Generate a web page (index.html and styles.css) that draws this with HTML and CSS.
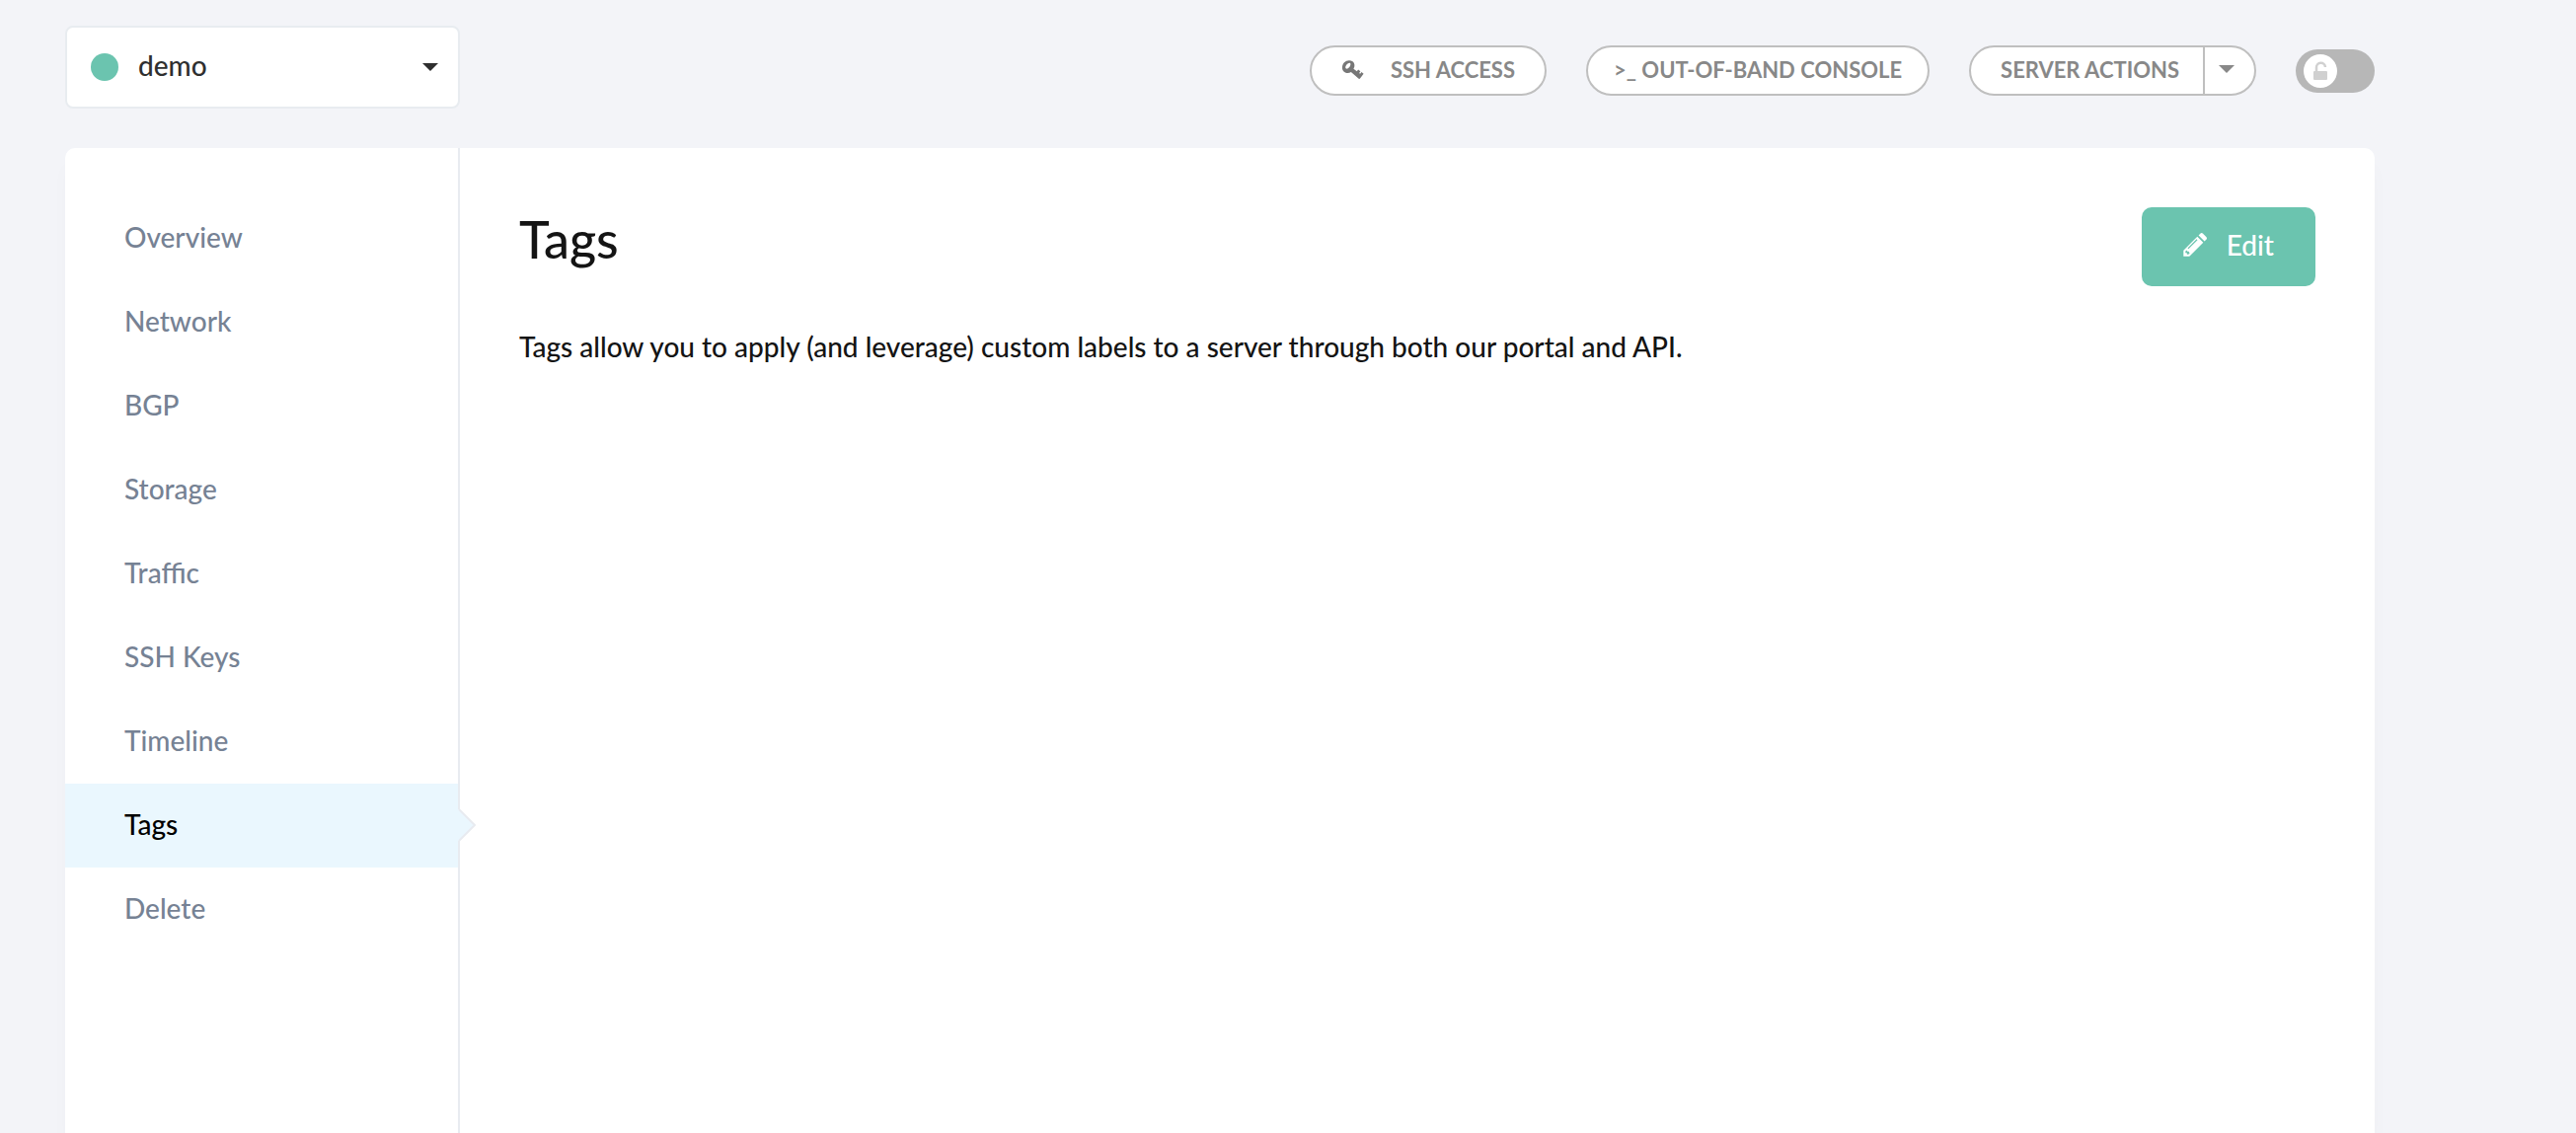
FILE: index.html
```html
<!DOCTYPE html>
<html lang="en">
<head>
  <meta charset="utf-8">
  <meta name="viewport" content="width=device-width, initial-scale=1">
  <title>Tags</title>
  <link rel="stylesheet" href="styles.css">
</head>
<body>
  <div class="page">
    <header class="toolbar">
      <div class="server-picker">
        <span class="status-dot"></span>
        <select class="server-select" aria-label="Server">
          <option>demo</option>
        </select>
        <svg class="caret" viewBox="0 0 16 8" aria-hidden="true"><path d="M0 0h16L8 8z"/></svg>
      </div>
      <div class="actions">
        <button class="pill" type="button">
          <svg class="key-icon" viewBox="0 0 24 24" aria-hidden="true">
            <path fill-rule="evenodd" d="M3 4.200C5.200 1.900 9 1.400 11.500 3.300c2.300 1.800 2.500 4.900.9 7.500l3.400 2.500 1.300-1.700 2.300 1.700-1.300 1.700 1 .8 1.400-1.700 2.100 1.600-3.600 4.900c-.3.400-.9.500-1.300.2L9.900 14.100c-2.400 1.500-5.200 1.300-7.100-.4C.2 11.300.5 6.900 3 4.200zM8.700 4.800C7.500 4.600 5.800 5.700 4.900 7.200 4 8.600 4 10 4.900 10.500c1.100.5 2.700-.5 3.700-2 .9-1.500 1.200-3.400.1-3.700z"/>
          </svg>
          SSH ACCESS
        </button>
        <button class="pill pill-compact" type="button">&gt;_ OUT-OF-BAND CONSOLE</button>
        <div class="split">
          <button class="split-main" type="button">SERVER ACTIONS</button>
          <button class="split-more" type="button" aria-label="More server actions">
            <svg class="caret" viewBox="0 0 16 8" aria-hidden="true"><path d="M0 0h16L8 8z"/></svg>
          </button>
        </div>
        <label class="lock">
          <input class="lock-input" type="checkbox" role="switch" aria-label="Lock server">
          <span class="lock-knob">
            <svg class="lock-icon" viewBox="0 0 16 20" aria-hidden="true">
              <path d="M4 11V6.500a4.500 4.500 0 0 1 9-.5" fill="none" stroke="currentColor" stroke-width="2.500"/>
              <rect x="1" y="10" width="14" height="9" rx="1" fill="currentColor"/>
            </svg>
          </span>
        </label>
      </div>
    </header>

    <div class="card">
      <nav class="sidebar" aria-label="Server sections">
        <a class="nav-link" href="#overview">Overview</a>
        <a class="nav-link" href="#network">Network</a>
        <a class="nav-link" href="#bgp">BGP</a>
        <a class="nav-link" href="#storage">Storage</a>
        <a class="nav-link" href="#traffic">Traffic</a>
        <a class="nav-link" href="#ssh-keys">SSH Keys</a>
        <a class="nav-link" href="#timeline">Timeline</a>
        <a class="nav-link active" href="#tags" aria-current="page">Tags
          <svg class="nav-arrow" viewBox="0 0 20 32" aria-hidden="true"><path class="arrow-fill" d="M0 0h1l16 16L1 32H0z"/><path class="arrow-line" d="M1 0l16 16L1 32"/></svg>
        </a>
        <a class="nav-link" href="#delete">Delete</a>
      </nav>
      <main class="content">
        <div class="content-head">
          <h1 class="title">Tags</h1>
          <button class="edit" type="button">
            <svg class="pencil-icon" viewBox="0 0 24 24" aria-hidden="true">
              <path fill-rule="evenodd" d="M14.300 3.800l6 6L6.300 23.800H.3v-6zM13.600 6.300L4.500 15.400l.9.900 9.100-9.100zM3.300 17.500l-1 1.300v1.400h1.500v1.600h1.400l1.400-1.100-1-1.900-1.300-.1z"/>
              <path d="M15.600 2.500l1.700-1.700a2 2 0 0 1 2.800 0l3.200 3.200a2 2 0 0 1 0 2.800l-1.700 1.700z"/>
            </svg>
            Edit
          </button>
        </div>
        <p class="intro">Tags allow you to apply (and leverage) custom labels to a server through both our portal and API.</p>
      </main>
    </div>
  </div>
</body>
</html>
```
FILE: styles.css
```css
*,
*::before,
*::after {
  box-sizing: border-box;
}

body {
  margin: 0;
  background: #f3f4f8;
  color: #141414;
  font-family: Lato, "Liberation Sans", sans-serif;
  font-size: 28px;
  font-weight: 500;
  line-height: 40px;
}

button,
select {
  font: inherit;
  color: inherit;
  cursor: pointer;
}

svg {
  display: block;
  flex: none;
  fill: currentColor;
}

.page {
  display: flex;
  flex-direction: column;
  gap: 40px;
  min-height: 100vh;
  padding: 26px 204px 0 66px;
}

.toolbar {
  display: flex;
  justify-content: space-between;
  align-items: flex-start;
}

.server-picker {
  display: flex;
  align-items: center;
  width: 400px;
  height: 84px;
  padding: 0 20px 0 24px;
  border: 2px solid #e8ecf0;
  border-radius: 8px;
  background: #fff;
  color: #2f2f2f;
}

.status-dot {
  width: 28px;
  height: 28px;
  border-radius: 50%;
  background: #6bc4af;
}

.server-select {
  flex: 1;
  height: 100%;
  margin: 0;
  padding: 0 20px 4px;
  border: 0;
  background: none;
  appearance: none;
}

.caret {
  width: 16px;
  height: 8px;
}

.actions {
  display: flex;
  align-items: center;
  gap: 40px;
  padding-top: 20px;
  color: #888;
  font-size: 22px;
  font-weight: 700;
}

.pill,
.split {
  display: flex;
  align-items: center;
  height: 51px;
  border: 2px solid #bfbfbf;
  border-radius: 26px;
  background: #fff;
}

.pill {
  gap: 26px;
  padding: 0 30px 2px;
}

.pill-compact {
  padding: 0 26px 2px;
}

.key-icon {
  width: 24px;
  height: 24px;
  color: #777;
}

.split {
  overflow: hidden;
}

.split-main,
.split-more {
  height: 100%;
  padding: 0 24px 2px 30px;
  border: 0;
  background: none;
}

.split-more {
  padding: 0 20px 4px 14px;
  border-left: 2px solid #bfbfbf;
}

.lock {
  display: flex;
  align-items: center;
  position: relative;
  width: 80px;
  height: 44px;
  padding: 0 8px;
  border-radius: 22px;
  background: #b7b7b7;
}

.lock-input {
  position: absolute;
  inset: 0;
  width: 100%;
  height: 100%;
  margin: 0;
  opacity: 0;
  cursor: pointer;
}

.lock-knob {
  display: flex;
  align-items: center;
  justify-content: center;
  width: 34px;
  height: 34px;
  border-radius: 50%;
  background: #fff;
  color: #d0d0d0;
}

.lock-icon {
  width: 16px;
  height: 20px;
}

.card {
  display: flex;
  flex: 1;
  border-radius: 10px 10px 0 0;
  background: #fff;
  box-shadow: 0 16px 20px rgba(40, 50, 90, 0.02);
}

.sidebar {
  width: 400px;
  padding-top: 49px;
  border-right: 2px solid #e8ebf0;
}

.nav-link {
  display: flex;
  align-items: center;
  position: relative;
  height: 85px;
  padding: 0 60px 4px;
  color: #768294;
  text-decoration: none;
}

.nav-link.active {
  background: #eaf7fe;
  color: #000;
}

.nav-arrow {
  position: absolute;
  top: 26px;
  left: 100%;
  width: 20px;
  height: 32px;
}

.arrow-fill {
  fill: #eaf7fe;
}

.arrow-line {
  fill: none;
  stroke: #e8ebf0;
  stroke-width: 2;
}

.content {
  flex: 1;
  padding: 60px;
}

.content-head {
  display: flex;
  justify-content: space-between;
  align-items: flex-start;
}

.title {
  margin: 0;
  font-size: 52px;
  font-weight: 500;
  line-height: 64px;
}

.edit {
  display: flex;
  align-items: center;
  gap: 20px;
  height: 80px;
  padding: 0 42px 4px;
  border: 0;
  border-radius: 10px;
  background: #6bc4af;
  color: #fff;
}

.pencil-icon {
  width: 24px;
  height: 24px;
}

.intro {
  margin: 41px 0 0;
}
```
